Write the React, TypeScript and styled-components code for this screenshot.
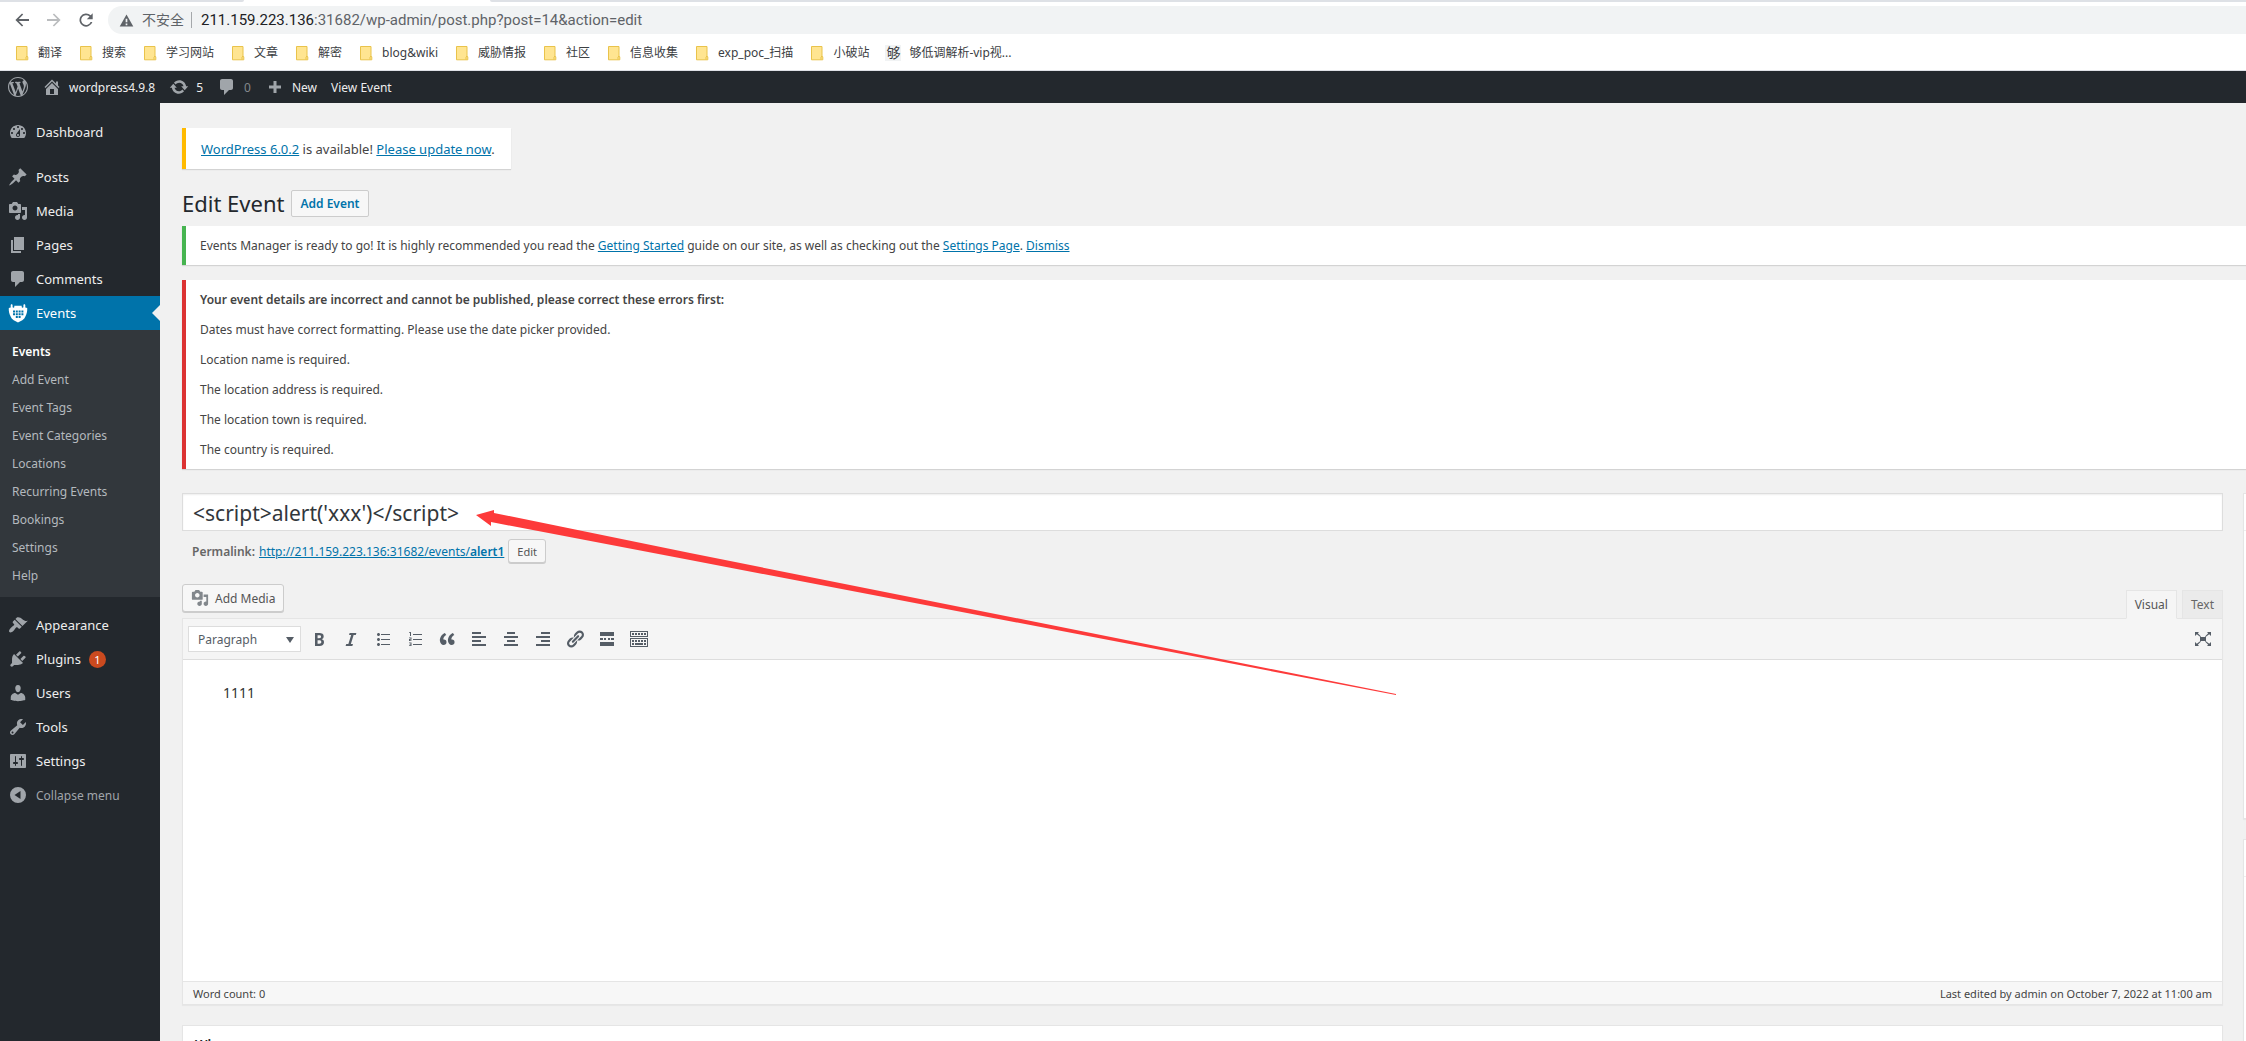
import React from "react";
import styled, { createGlobalStyle, css } from "styled-components";

const UI_FONT = '"Noto Sans", "Open Sans", "Noto Sans CJK SC", sans-serif';

const GlobalStyle = createGlobalStyle`
  *, *::before, *::after { box-sizing: border-box; }
  body {
    margin: 0;
    background: #f1f1f1;
    color: #444;
    font-family: ${UI_FONT};
    font-size: 12px;
    line-height: 19px;
  }
  button, input, select { font-family: inherit; }
  p, h1, h2, ul { margin: 0; padding: 0; }
  ul { list-style: none; }
`;

/* ---------- icons ---------- */

const ICONS = {
  wordpress:
    "M20 10c0-5.51-4.49-10-10-10C4.48 0 0 4.49 0 10c0 5.52 4.48 10 10 10 5.51 0 10-4.48 10-10zM7.78 15.37L4.37 6.22c.55-.02 1.17-.08 1.17-.08.5-.06.44-1.13-.06-1.11 0 0-1.45.11-2.37.11-.18 0-.37 0-.58-.01C4.12 2.69 6.87 1.11 10 1.11c2.33 0 4.45.87 6.05 2.34-.68-.11-1.65.39-1.65 1.58 0 .74.45 1.36.9 2.1.35.61.55 1.36.55 2.46 0 1.49-1.4 5-1.4 5l-3.03-8.37c.54-.02.82-.17.82-.17.5-.05.44-1.25-.06-1.22 0 0-1.44.12-2.38.12-.87 0-2.33-.12-2.33-.12-.5-.03-.56 1.2-.06 1.22l.92.08 1.26 3.41zM17.41 10c.24-.64.74-1.87.43-4.25.7 1.29 1.05 2.71 1.05 4.25 0 3.29-1.73 6.24-4.4 7.78.97-2.59 1.94-5.2 2.92-7.78zM6.1 18.09C3.12 16.65 1.11 13.53 1.11 10c0-1.3.23-2.48.72-3.59C3.25 10.3 4.67 14.2 6.1 18.09zm4.03-6.63l2.58 6.98c-.86.29-1.76.45-2.71.45-.79 0-1.57-.11-2.29-.33.81-2.38 1.62-4.74 2.42-7.1z",
  home: "M16 8.5l1.53 1.53-1.06 1.06L10 4.6l-6.47 6.49-1.06-1.06L10 2.5l4 4v-2h2v4zm-6-2.46l6 5.99V18H4v-5.97zM12 17v-5H8v5h4z",
  update:
    "M10.2 3.28c3.53 0 6.43 2.61 6.92 6h2.08l-3.5 4-3.5-4h2.32c-.45-1.97-2.21-3.45-4.32-3.45-1.45 0-2.73.71-3.54 1.78L4.95 5.66C6.23 4.2 8.11 3.28 10.2 3.28zm-.4 13.44c-3.52 0-6.43-2.61-6.92-6H.8l3.5-4c1.17 1.33 2.33 2.67 3.5 4H5.48c.45 1.97 2.21 3.45 4.32 3.45 1.45 0 2.73-.71 3.54-1.78l1.71 1.95c-1.28 1.46-3.15 2.38-5.25 2.38z",
  plus: "M8.5 4h3v4.5H16v3h-4.5V16h-3v-4.5H4v-3h4.5z",
  dashboard:
    "M3.76 16h12.48c1.1-1.37 1.76-3.11 1.76-5 0-4.42-3.58-8-8-8s-8 3.58-8 8c0 1.89.66 3.63 1.76 5zM10 4c.55 0 1 .45 1 1s-.45 1-1 1-1-.45-1-1 .45-1 1-1zM6 6c.55 0 1 .45 1 1s-.45 1-1 1-1-.45-1-1 .45-1 1-1zm8 0c.55 0 1 .45 1 1s-.45 1-1 1-1-.45-1-1 .45-1 1-1zm-5.37 5.55L12 7v6c0 1.1-.9 2-2 2s-2-.9-2-2c0-.57.24-1.08.63-1.45zM4 10c.55 0 1 .45 1 1s-.45 1-1 1-1-.45-1-1 .45-1 1-1zm12 0c.55 0 1 .45 1 1s-.45 1-1 1-1-.45-1-1 .45-1 1-1zm-5 3c0-.55-.45-1-1-1s-1 .45-1 1 .45 1 1 1 1-.45 1-1z",
  post: "M10.44 3.02l1.82-1.82 6.36 6.35-1.83 1.82c-1.05-.68-2.48-.57-3.41.36l-.75.75c-.92.93-1.04 2.35-.35 3.41l-1.83 1.82-2.41-2.41-2.8 2.79c-.42.42-3.38 2.71-3.8 2.29s1.86-3.39 2.28-3.81l2.79-2.79L4.1 9.36l1.83-1.82c1.05.69 2.48.57 3.4-.36l.75-.75c.93-.92 1.05-2.35.36-3.41z",
  media:
    "M13 11V4c0-.55-.45-1-1-1h-1.67L9 1H5L3.67 3H2c-.55 0-1 .45-1 1v7c0 .55.45 1 1 1h10c.55 0 1-.45 1-1zM7 4.5c1.38 0 2.5 1.12 2.5 2.5S8.38 9.5 7 9.5 4.5 8.38 4.5 7 5.62 4.5 7 4.5zM14 6h5v10.5c0 1.38-1.12 2.5-2.5 2.5S14 17.88 14 16.5s1.12-2.5 2.5-2.5c.17 0 .34.02.5.05V9h-3V6zm-4 8.05V13h2v3.5c0 1.38-1.12 2.5-2.5 2.5S7 17.88 7 16.5 8.12 14 9.5 14c.17 0 .34.02.5.05z",
  page: "M6 15V2h10v13H6zm-1 1h8v2H3V5h2v11z",
  comment:
    "M5 2h9c1.1 0 2 .9 2 2v7c0 1.1-.9 2-2 2h-2l-5 5v-5H5c-1.1 0-2-.9-2-2V4c0-1.1.9-2 2-2z",
  events:
    "M3.6 1.2c.6 0 1 .5 1 1.1V4c0 .5.4.8.9.8s.8-.3.8-.8V2.8h7.4V4c0 .5.4.8.9.8s.8-.3.8-.8V2.3c0-.6.4-1.1 1-1.1s.9.5.9 1.1V4.5L19.2 5c.3 3.2-.6 6-1.7 8.2l-1.2 2.4-2 1.6L10 19.5l-4.3-2.3-2-1.6-1.2-2.4C1.4 11 .5 8.2.8 5l1.9-.5V2.3c0-.6.4-1.1.9-1.1zM5 7.5v2h2v-2zm2.8 0v2h2v-2zm2.8 0v2h2v-2zm2.8 0v2h2v-2zM5 10.3v2h2v-2zm2.8 0v2h2v-2zm2.8 0v2h2v-2zm2.8 0v2h2v-2zM7.8 13.1v2h2v-2zm2.8 0v2h2v-2z",
  appearance:
    "M14.48 11.06L7.41 3.99l1.5-1.5c.5-.56 2.3-.47 3.51.32 1.21.8 1.43 1.28 2.91 2.1 1.18.64 2.45 1.26 4.45.85zm-.71.71L6.7 4.7 4.93 6.47c-.39.39-.39 1.02 0 1.41l1.06 1.06c.39.39.39 1.03 0 1.42-.6.6-1.43 1.11-2.21 1.69-.35.26-.7.53-1.01.84C1.43 14.23.4 16.08 1.4 17.07c.99 1 2.84-.03 4.18-1.36.31-.31.58-.66.85-1.02.57-.78 1.08-1.61 1.69-2.21.39-.39 1.02-.39 1.41 0l1.06 1.06c.39.39 1.02.39 1.41 0z",
  plugins:
    "M13.11 4.36L9.87 7.6 8 5.73l3.24-3.24c.35-.34 1.05-.2 1.56.32.52.51.66 1.21.31 1.55zm-8 1.77l.91-1.12 9.01 9.01-1.19.84c-.71.71-2.63 1.16-3.82 1.16H6.14L4.9 17.26c-.59.59-1.54.59-2.12 0-.59-.58-.59-1.53 0-2.12l1.24-1.24v-3.88c0-1.13.4-3.19 1.09-3.89zm7.26 3.97l3.24-3.24c.34-.35 1.04-.21 1.55.31.52.51.66 1.21.31 1.55l-3.24 3.25z",
  users:
    "M10 9.25c-2.27 0-2.73-3.44-2.73-3.44C7 4.02 7.82 2 9.97 2c2.16 0 2.98 2.02 2.71 3.81 0 0-.41 3.44-2.68 3.44zm0 2.57L12.72 10c2.39 0 4.52 2.33 4.52 4.53v2.49s-3.65 1.13-7.24 1.13c-3.65 0-7.24-1.13-7.24-1.13v-2.49c0-2.25 1.94-4.48 4.47-4.48z",
  tools:
    "M16.68 9.77c-1.34 1.34-3.3 1.67-4.95.99l-5.41 6.52c-.99.99-2.59.99-3.58 0s-.99-2.59 0-3.57l6.52-5.42c-.68-1.65-.35-3.61.99-4.95 1.28-1.28 3.12-1.62 4.72-1.06l-2.89 2.89 2.82 2.82 2.86-2.87c.53 1.58.18 3.39-1.08 4.65zM3.81 16.21c.4.39 1.04.39 1.43 0 .4-.4.4-1.04 0-1.43-.39-.4-1.03-.4-1.43 0-.39.39-.39 1.03 0 1.43z",
  settings:
    "M18 16V4c0-.55-.45-1-1-1H3c-.55 0-1 .45-1 1v12c0 .55.45 1 1 1h14c.55 0 1-.45 1-1zM8 11h1c.55 0 1 .45 1 1s-.45 1-1 1H8v1.5c0 .28-.22.5-.5.5s-.5-.22-.5-.5V13H6c-.55 0-1-.45-1-1s.45-1 1-1h1V5.5c0-.28.22-.5.5-.5s.5.22.5.5V11zm5-2h-1c-.55 0-1-.45-1-1s.45-1 1-1h1V5.5c0-.28.22-.5.5-.5s.5.22.5.5V7h1c.55 0 1 .45 1 1s-.45 1-1 1h-1v5.5c0 .28-.22.5-.5.5s-.5-.22-.5-.5V9z",
  collapse: "M10 2a8 8 0 1 1 0 16 8 8 0 0 1 0-16zM12.5 6L6.5 10l6 4z",
  bold: "M6 4v13h4.54c1.37 0 2.46-.33 3.26-1 .8-.66 1.2-1.58 1.2-2.77 0-.84-.17-1.51-.51-2.01s-.9-.85-1.67-1.03v-.09c.57-.1 1.02-.4 1.36-.9s.51-1.13.51-1.91c0-1.14-.39-1.98-1.17-2.5C12.75 4.26 11.5 4 9.78 4H6zm2.57 5.15V6.26h1.36c.73 0 1.27.11 1.61.32.34.22.51.58.51 1.07 0 .54-.16.92-.47 1.15s-.82.35-1.51.35h-1.5zm0 2.19h1.6c1.44 0 2.16.53 2.16 1.61 0 .6-.17 1.05-.51 1.34s-.86.43-1.57.43H8.57v-3.38z",
  italic: "M14.78 6h-2.13l-2.8 9h2.12l-.62 2H4.6l.62-2h2.14l2.8-9H8.03l.62-2h6.75z",
  ul: "M5.5 7C4.67 7 4 6.33 4 5.5 4 4.68 4.67 4 5.5 4 6.32 4 7 4.68 7 5.5 7 6.33 6.32 7 5.5 7zM8 5h9v1H8V5zm-2.5 7c-.83 0-1.5-.67-1.5-1.5C4 9.68 4.67 9 5.5 9c.82 0 1.5.68 1.5 1.5 0 .83-.68 1.5-1.5 1.5zM8 10h9v1H8v-1zm-2.5 7c-.83 0-1.5-.67-1.5-1.5 0-.82.67-1.5 1.5-1.5.82 0 1.5.68 1.5 1.5 0 .83-.68 1.5-1.5 1.5zM8 15h9v1H8v-1z",
  ol: "M8 5h9v1H8zM8 10h9v1H8zM8 15h9v1H8zM5 3h1v4H5V4H4V3.5zM4 8.5h2.5v2.3H5v.4h1.5v.8H4V9.9h1.5v-.6H4zM4 13.5h2.5V17H4v-.8h1.5v-.6H4.5v-.7h1v-.6H4z",
  quote:
    "M9.49 13.22c0-.74-.2-1.38-.61-1.9-.62-.78-1.83-.88-2.53-.72-.29-1.65 1.11-3.75 2.92-4.65L7.88 4c-2.73 1.3-5.42 4.28-4.96 8.05C3.21 14.43 4.59 16 6.54 16c.85 0 1.56-.25 2.12-.75s.83-1.18.83-2.03zm8.05 0c0-.74-.2-1.38-.61-1.9-.63-.78-1.83-.88-2.53-.72-.29-1.65 1.11-3.75 2.92-4.65L15.93 4c-2.73 1.3-5.41 4.28-4.95 8.05.29 2.38 1.66 3.95 3.61 3.95.85 0 1.56-.25 2.12-.75s.83-1.18.83-2.03z",
  alignLeft: "M12 5V3H3v2h9zm5 4V7H3v2h14zm-5 4v-2H3v2h9zm5 4v-2H3v2h14z",
  alignCenter: "M14 5V3H6v2h8zm3 4V7H3v2h14zm-3 4v-2H6v2h8zm3 4v-2H3v2h14z",
  alignRight: "M17 5V3H8v2h9zm0 4V7H3v2h14zm0 4v-2H8v2h9zm0 4v-2H3v2h14z",
  link: "M17.74 2.76c1.68 1.69 1.68 4.41 0 6.1l-1.53 1.52c-1.12 1.12-2.7 1.47-4.14 1.09l2.62-2.61.76-.77.76-.76c.84-.84.84-2.2 0-3.04-.84-.85-2.2-.85-3.04 0l-.77.76-3.38 3.38c-.37-1.44-.02-3.02 1.1-4.14l1.52-1.53c1.69-1.68 4.42-1.68 6.1 0zM8.59 13.43l5.34-5.34c.42-.42.42-1.1 0-1.52-.44-.43-1.13-.39-1.53 0l-5.33 5.34c-.42.42-.42 1.1 0 1.52.44.43 1.13.39 1.52 0zm-.76 2.29l4.14-4.15c.38 1.44.03 3.02-1.09 4.14l-1.52 1.53c-1.69 1.68-4.41 1.68-6.1 0-1.68-1.68-1.68-4.42 0-6.1l1.53-1.52c1.12-1.12 2.7-1.47 4.14-1.1l-4.14 4.15c-.85.84-.85 2.2 0 3.05.84.84 2.2.84 3.04 0z",
  more: "M3 3h14v4H3zM3 9h3v2H3zM7 9h2v2H7zM11 9h2v2h-2zM14 9h3v2h-3zM3 13h14v4H3z",
  kitchenSink:
    "M1 2h18v6H1zM2 3v4h16V3zM3 4h2v2H3zM6 4h2v2H6zM9 4h2v2H9zM12 4h2v2h-2zM15 4h2v2h-2zM1 9h18v9H1zM2 10v7h16v-7zM3 11h2v2H3zM6 11h2v2H6zM9 11h2v2H9zM12 11h2v2h-2zM15 11h2v2h-2zM3 14h2v2H3zM6 14h8v2H6zM15 14h2v2h-2z",
  fullscreen:
    "M7 8h6v4H7zM2 3h4L4.8 4.2 8 7.4 7.4 8 3.8 5.2 2 7zM18 3h-4l1.2 1.2L12 7.4l.6.6 3.6-2.8L18 7zM2 17h4l-1.2-1.2L8 12.6l-.6-.6-3.6 2.8L2 13zM18 17h-4l1.2-1.2L12 12.6l.6-.6 3.6 2.8L18 13z",
  back: "M17 9H6.8l4.4-4.4L10 3.4 3.4 10l6.6 6.6 1.2-1.2L6.8 11H17z",
  forward: "M3 9h10.2L8.8 4.6 10 3.4l6.6 6.6-6.6 6.6-1.2-1.2 4.4-4.4H3z",
  reload:
    "M14.7 5.3A6.6 6.6 0 1 0 16.4 12h-1.8A4.9 4.9 0 1 1 13.5 6.5L10.8 9.2H16.7V3.3z",
  warning: "M10 3l8 14H2zM9 8v4h2V8zM9 13.5v2h2v-2z",
} as const;

type IconName = keyof typeof ICONS;

const IconSvg = styled.svg<{ $size: number }>`
  display: block;
  flex: none;
  width: ${(p) => p.$size}px;
  height: ${(p) => p.$size}px;
  fill: currentColor;
`;

const Icon = ({ name, size = 20 }: { name: IconName; size?: number }) => (
  <IconSvg $size={size} viewBox="0 0 20 20" aria-hidden="true">
    <path d={ICONS[name]} fillRule="evenodd" />
  </IconSvg>
);

/* ---------- browser frame ---------- */

const Page = styled.div`
  display: flex;
  flex-direction: column;
  height: 100vh;
  overflow: hidden;
`;

const BrowserFrame = styled.header`
  flex: none;
  background: #fff;
  border-bottom: 1px solid #dee1e6;
`;

const TabStrip = styled.div`
  display: grid;
  grid-template-columns: 244px 246px 1fr;
  height: 2px;
  background: #fff;
`;

const InactiveTabs = styled.div<{ $side: "left" | "right" }>`
  grid-column: ${(p) => (p.$side === "left" ? 1 : 3)};
  background: #dee1e6;
  border-radius: ${(p) => (p.$side === "left" ? "0 0 4px 0" : "0 0 0 4px")};
`;

const AddressRow = styled.div`
  display: flex;
  align-items: center;
  gap: 12px;
  padding: 4px 0 0 12px;
`;

const NavButton = styled.button<{ $dim?: boolean }>`
  display: flex;
  padding: 0;
  border: 0;
  background: none;
  color: ${(p) => (p.$dim ? "#babcbe" : "#5f6368")};
`;

const Omnibox = styled.div`
  display: flex;
  flex: 1;
  align-items: center;
  height: 28px;
  padding-left: 10px;
  border-radius: 14px 0 0 14px;
  background: #f1f3f4;
  color: #5f6368;
`;

const Insecure = styled.span`
  margin-left: 7px;
  padding-right: 7px;
  border-right: 1px solid #a5a8ab;
  font-size: 14px;
  line-height: 16px;
`;

const Url = styled.span`
  margin-left: 9px;
  font-family: Roboto, ${UI_FONT};
  font-size: 15px;
  b {
    color: #202124;
    font-weight: 400;
  }
`;

const Bookmarks = styled.nav`
  display: flex;
  align-items: center;
  height: 36px;
  padding-left: 6px;
`;

const Bookmark = styled.a`
  display: flex;
  align-items: center;
  gap: 8px;
  padding: 1px 8px 0;
  color: #3c4043;
  font-size: 12px;
  line-height: 20px;
  text-decoration: none;
`;

const FolderSvg = styled.svg`
  display: block;
  width: 16px;
  height: 16px;
`;

const Favicon = styled.span`
  width: 16px;
  background: #f1f3f4;
  font-size: 14px;
  line-height: 16px;
  text-align: center;
`;

const Folder = () => (
  <FolderSvg viewBox="0 0 16 16" aria-hidden="true">
    <path
      d="M2.5 1.5h10.5v9.5l.8.8v3H2.5z"
      fill="#ffe591"
      stroke="#e9c34b"
    />
    <path d="M12 14.5v-2.5l1-1" fill="none" stroke="#e9c34b" />
  </FolderSvg>
);

const FOLDERS = [
  "翻译",
  "搜索",
  "学习网站",
  "文章",
  "解密",
  "blog&wiki",
  "威胁情报",
  "社区",
  "信息收集",
  "exp_poc_扫描",
  "小破站",
];

const Browser = () => (
  <BrowserFrame>
    <TabStrip>
      <InactiveTabs $side="left" />
      <InactiveTabs $side="right" />
    </TabStrip>
    <AddressRow>
      <NavButton aria-label="Back">
        <Icon name="back" />
      </NavButton>
      <NavButton aria-label="Forward" $dim>
        <Icon name="forward" />
      </NavButton>
      <NavButton aria-label="Reload">
        <Icon name="reload" />
      </NavButton>
      <Omnibox>
        <Icon name="warning" size={17} />
        <Insecure>不安全</Insecure>
        <Url>
          <b>211.159.223.136</b>:31682/wp-admin/post.php?post=14&amp;action=edit
        </Url>
      </Omnibox>
    </AddressRow>
    <Bookmarks aria-label="Bookmarks">
      {FOLDERS.map((name) => (
        <Bookmark href="#" key={name}>
          <Folder />
          {name}
        </Bookmark>
      ))}
      <Bookmark href="#">
        <Favicon>够</Favicon>
        够低调解析-vip视...
      </Bookmark>
    </Bookmarks>
  </BrowserFrame>
);

/* ---------- admin bar ---------- */

const AdminBar = styled.nav`
  display: flex;
  flex: none;
  height: 32px;
  padding-left: 1px;
  background: #23282d;
  font-size: 12px;
`;

const BarLink = styled.a<{ $muted?: boolean }>`
  display: flex;
  align-items: center;
  gap: 7px;
  padding: 0 7px;
  color: ${(p) => (p.$muted ? "#84888c" : "#eee")};
  text-decoration: none;
  svg {
    color: #a0a5aa;
  }
`;

/* ---------- side menu ---------- */

const Body = styled.div`
  display: flex;
  flex: 1;
  min-height: 0;
`;

const SideMenu = styled.nav`
  flex: none;
  width: 160px;
  padding-top: 12px;
  background: #23282d;
`;

const MenuGroup = styled.ul`
  & + & {
    margin-top: 11px;
  }
`;

const menuItem = css`
  display: flex;
  align-items: center;
  gap: 8px;
  width: 100%;
  height: 34px;
  padding: 0 8px;
  border: 0;
  font-size: 13px;
  text-align: left;
  text-decoration: none;
`;

const MenuLink = styled.a<{ $active?: boolean }>`
  ${menuItem}
  position: relative;
  background: ${(p) => (p.$active ? "#0073aa" : "transparent")};
  color: ${(p) => (p.$active ? "#fff" : "#eee")};
  svg {
    color: ${(p) => (p.$active ? "#fff" : "#a0a5aa")};
  }
  &::after {
    content: "";
    display: ${(p) => (p.$active ? "block" : "none")};
    position: absolute;
    right: 0;
    top: 9px;
    border: 8px solid transparent;
    border-right-color: #f1f1f1;
  }
`;

const CollapseButton = styled.button`
  ${menuItem}
  background: none;
  color: #a0a5aa;
  font-size: 12px;
`;

const Count = styled.span`
  width: 17px;
  height: 17px;
  border-radius: 50%;
  background: #ca4a1f;
  color: #fff;
  font-size: 11px;
  line-height: 17px;
  text-align: center;
`;

const SubMenu = styled.ul`
  padding: 8px 0 7px;
  background: #32373c;
`;

const SubLink = styled.a<{ $current?: boolean }>`
  display: block;
  padding: 4px 12px;
  color: ${(p) => (p.$current ? "#fff" : "#b4b9be")};
  font-size: 12px;
  font-weight: ${(p) => (p.$current ? 600 : 400)};
  line-height: 20px;
  text-decoration: none;
`;

const MAIN_ITEMS: [IconName, string][] = [
  ["post", "Posts"],
  ["media", "Media"],
  ["page", "Pages"],
  ["comment", "Comments"],
  ["events", "Events"],
];

const SUB_ITEMS = [
  "Events",
  "Add Event",
  "Event Tags",
  "Event Categories",
  "Locations",
  "Recurring Events",
  "Bookings",
  "Settings",
  "Help",
];

const ADMIN_ITEMS: [IconName, string, number?][] = [
  ["appearance", "Appearance"],
  ["plugins", "Plugins", 1],
  ["users", "Users"],
  ["tools", "Tools"],
  ["settings", "Settings"],
];

const Menu = () => (
  <SideMenu aria-label="Main menu">
    <MenuGroup>
      <li>
        <MenuLink href="#">
          <Icon name="dashboard" />
          Dashboard
        </MenuLink>
      </li>
    </MenuGroup>
    <MenuGroup>
      {MAIN_ITEMS.map(([icon, label]) => (
        <li key={label}>
          <MenuLink href="#" $active={label === "Events"}>
            <Icon name={icon} />
            {label}
          </MenuLink>
        </li>
      ))}
      <li>
        <SubMenu>
          {SUB_ITEMS.map((label, i) => (
            <li key={label}>
              <SubLink href="#" $current={i === 0}>
                {label}
              </SubLink>
            </li>
          ))}
        </SubMenu>
      </li>
    </MenuGroup>
    <MenuGroup>
      {ADMIN_ITEMS.map(([icon, label, count]) => (
        <li key={label}>
          <MenuLink href="#">
            <Icon name={icon} />
            {label}
            {count && <Count>{count}</Count>}
          </MenuLink>
        </li>
      ))}
      <li>
        <CollapseButton>
          <Icon name="collapse" />
          Collapse menu
        </CollapseButton>
      </li>
    </MenuGroup>
  </SideMenu>
);

/* ---------- content ---------- */

const Content = styled.main`
  position: relative;
  flex: 1;
  min-width: 0;
  padding: 25px 0 0 22px;
  overflow: hidden;
`;

const A = styled.a`
  color: #0073aa;
`;

const Notice = styled.div<{ $accent: string }>`
  display: grid;
  gap: 11px;
  padding: 10px 14px;
  border-left: 4px solid ${(p) => p.$accent};
  background: #fff;
  box-shadow: 0 1px 1px rgba(0, 0, 0, 0.12);
  & + & {
    margin-top: 15px;
  }
`;

const NoticeLead = styled.p`
  font-weight: 600;
`;

const UpdateNag = styled.div`
  width: fit-content;
  padding: 12px 16px 10px 15px;
  border-left: 4px solid #ffba00;
  background: #fff;
  box-shadow: 0 1px 1px rgba(0, 0, 0, 0.12);
  font-size: 13px;
`;

const TitleRow = styled.div`
  display: flex;
  align-items: center;
  gap: 7px;
  margin: 21px 0 9px;
`;

const PageTitle = styled.h1`
  color: #23282d;
  font-size: 22px;
  font-weight: 400;
  line-height: 27px;
`;

const AddEvent = styled.a`
  padding: 3px 8px;
  border: 1px solid #ccc;
  border-radius: 2px;
  background: #f7f7f7;
  color: #0073aa;
  font-size: 12px;
  font-weight: 600;
  text-decoration: none;
`;

/* The side column runs past the right edge of the window. */
const Columns = styled.div`
  display: grid;
  grid-template-columns: minmax(0, 1fr) 280px;
  gap: 20px;
  width: calc(100% + 277px);
  margin-top: 24px;
`;

const TitleInput = styled.input`
  display: block;
  width: 100%;
  height: 38px;
  padding: 2px 10px 0;
  border: 1px solid #ddd;
  background: #fff;
  box-shadow: inset 0 1px 2px rgba(0, 0, 0, 0.07);
  color: #32373c;
  font-size: 21px;
`;

const Permalink = styled.div`
  display: flex;
  align-items: center;
  gap: 4px;
  margin-top: 8px;
  padding-left: 10px;
  color: #666;
  strong {
    font-weight: 600;
  }
`;

const Button = styled.button<{ $size?: "small" }>`
  display: flex;
  align-items: center;
  gap: 6px;
  height: ${(p) => (p.$size === "small" ? 24 : 28)}px;
  padding: 0 8px;
  border: 1px solid #ccc;
  border-radius: 3px;
  background: #f7f7f7;
  box-shadow: 0 1px 0 #ccc;
  color: #555;
  font-size: ${(p) => (p.$size === "small" ? 11 : 12)}px;
  svg {
    color: #82878c;
  }
`;

const EditorTop = styled.div`
  display: flex;
  align-items: flex-end;
  gap: 5px;
  margin-top: 21px;
`;

const MediaSlot = styled.div`
  flex: 1;
  padding-bottom: 6px;
  button {
    width: fit-content;
  }
`;

const EditorTab = styled.button<{ $active?: boolean }>`
  position: relative;
  height: 29px;
  margin-bottom: -1px;
  padding: 0 8px;
  border: 1px solid #e5e5e5;
  border-bottom-color: ${(p) => (p.$active ? "#f5f5f5" : "#e5e5e5")};
  background: ${(p) => (p.$active ? "#f5f5f5" : "#ebebeb")};
  color: ${(p) => (p.$active ? "#555" : "#666")};
  font-size: 12px;
`;

const Editor = styled.section`
  border: 1px solid #e5e5e5;
  background: #fff;
  box-shadow: 0 1px 1px rgba(0, 0, 0, 0.04);
`;

const Toolbar = styled.div`
  display: flex;
  align-items: center;
  height: 41px;
  padding: 0 9px 0 5px;
  border-bottom: 1px solid #ddd;
  background: #f5f5f5;
  color: #555d66;
`;

const FormatBox = styled.div`
  position: relative;
  width: 113px;
  margin-right: 2px;
  svg {
    position: absolute;
    right: 7px;
    top: 11px;
    pointer-events: none;
  }
`;

const FormatSelect = styled.select`
  appearance: none;
  display: block;
  width: 100%;
  height: 26px;
  padding: 0 9px;
  border: 1px solid #ddd;
  border-radius: 0;
  background: #fff;
  color: #555d66;
  font-size: 12px;
`;

const ToolButton = styled.button<{ $end?: boolean }>`
  display: flex;
  align-items: center;
  justify-content: center;
  width: ${(p) => (p.$end ? 20 : 32)}px;
  height: 28px;
  margin-left: ${(p) => (p.$end ? "auto" : 0)};
  padding: 0;
  border: 0;
  background: none;
  color: inherit;
`;

const EditorBody = styled.div`
  min-height: 321px;
  padding: 21px 40px;
  color: #333;
  font-size: 14px;
  line-height: 24px;
`;

const StatusBar = styled.div`
  display: flex;
  justify-content: space-between;
  height: 23px;
  padding: 0 10px;
  border-top: 1px solid #e5e5e5;
  background: #f7f7f7;
  font-size: 11px;
  line-height: 24px;
`;

const Panel = styled.section<{ $height: number }>`
  height: ${(p) => p.$height}px;
  margin-bottom: 20px;
  border: 1px solid #e5e5e5;
  background: #fff;
  box-shadow: 0 1px 1px rgba(0, 0, 0, 0.04);
`;

const PanelHead = styled.h2`
  height: 37px;
  padding: 8px 12px;
  border-bottom: 1px solid #eee;
  color: #23282d;
  font-size: 13px;
  font-weight: 600;
  line-height: 20px;
`;

const MainColumn = styled.div`
  & > ${Panel} {
    margin-top: 20px;
  }
`;

const ArrowSvg = styled.svg`
  position: absolute;
  left: 316px;
  top: 405px;
  width: 920px;
  height: 187px;
  pointer-events: none;
`;

const TOOLS: [IconName, string][] = [
  ["bold", "Bold"],
  ["italic", "Italic"],
  ["ul", "Bulleted list"],
  ["ol", "Numbered list"],
  ["quote", "Blockquote"],
  ["alignLeft", "Align left"],
  ["alignCenter", "Align center"],
  ["alignRight", "Align right"],
  ["link", "Insert link"],
  ["more", "Insert Read More tag"],
  ["kitchenSink", "Toolbar toggle"],
];

export default function App() {
  return (
    <Page>
      <GlobalStyle />
      <Browser />
      <AdminBar aria-label="Toolbar">
        <BarLink href="#" aria-label="About WordPress">
          <Icon name="wordpress" />
        </BarLink>
        <BarLink href="#">
          <Icon name="home" />
          wordpress4.9.8
        </BarLink>
        <BarLink href="#">
          <Icon name="update" />5
        </BarLink>
        <BarLink href="#" $muted>
          <Icon name="comment" />0
        </BarLink>
        <BarLink href="#">
          <Icon name="plus" />
          New
        </BarLink>
        <BarLink href="#">View Event</BarLink>
      </AdminBar>
      <Body>
        <Menu />
        <Content>
          <UpdateNag>
            <A href="#">WordPress 6.0.2</A> is available!{" "}
            <A href="#">Please update now</A>.
          </UpdateNag>
          <TitleRow>
            <PageTitle>Edit Event</PageTitle>
            <AddEvent href="#">Add Event</AddEvent>
          </TitleRow>
          <Notice $accent="#46b450">
            <p>
              Events Manager is ready to go! It is highly recommended you read
              the <A href="#">Getting Started</A> guide on our site, as well as
              checking out the <A href="#">Settings Page</A>.{" "}
              <A href="#">Dismiss</A>
            </p>
          </Notice>
          <Notice $accent="#dc3232">
            <NoticeLead>
              Your event details are incorrect and cannot be published, please
              correct these errors first:
            </NoticeLead>
            <p>
              Dates must have correct formatting. Please use the date picker
              provided.
            </p>
            <p>Location name is required.</p>
            <p>The location address is required.</p>
            <p>The location town is required.</p>
            <p>The country is required.</p>
          </Notice>
          <Columns>
            <MainColumn>
              <TitleInput
                aria-label="Event title"
                defaultValue="<script>alert('xxx')</script>"
              />
              <Permalink>
                <strong>Permalink:</strong>
                <A href="#">
                  http://211.159.223.136:31682/events/<strong>alert1</strong>
                </A>
                <Button $size="small">Edit</Button>
              </Permalink>
              <EditorTop>
                <MediaSlot>
                  <Button>
                    <Icon name="media" size={18} />
                    Add Media
                  </Button>
                </MediaSlot>
                <EditorTab $active>Visual</EditorTab>
                <EditorTab>Text</EditorTab>
              </EditorTop>
              <Editor>
                <Toolbar>
                  <FormatBox>
                    <FormatSelect aria-label="Format" defaultValue="p">
                      <option value="p">Paragraph</option>
                    </FormatSelect>
                    <svg width="8" height="6" viewBox="0 0 8 6" aria-hidden="true">
                      <path d="M0 0h8L4 6z" fill="#555d66" />
                    </svg>
                  </FormatBox>
                  {TOOLS.map(([icon, label]) => (
                    <ToolButton key={icon} aria-label={label}>
                      <Icon name={icon} />
                    </ToolButton>
                  ))}
                  <ToolButton $end aria-label="Distraction-free writing mode">
                    <Icon name="fullscreen" />
                  </ToolButton>
                </Toolbar>
                <EditorBody>1111</EditorBody>
                <StatusBar>
                  <span>Word count: 0</span>
                  <span>Last edited by admin on October 7, 2022 at 11:00 am</span>
                </StatusBar>
              </Editor>
              <Panel $height={200}>
                <PanelHead>When</PanelHead>
              </Panel>
            </MainColumn>
            <div>
              <Panel $height={326}>
                <PanelHead />
              </Panel>
              <Panel $height={400}>
                <PanelHead />
              </Panel>
            </div>
          </Columns>
          <ArrowSvg viewBox="0 0 920 187" aria-hidden="true">
            <path
              d="M0 7L18 2 18 5 214 45 920 186 920 187 214 52 15 14 15 18z"
              fill="#fd3a3a"
            />
          </ArrowSvg>
        </Content>
      </Body>
    </Page>
  );
}
